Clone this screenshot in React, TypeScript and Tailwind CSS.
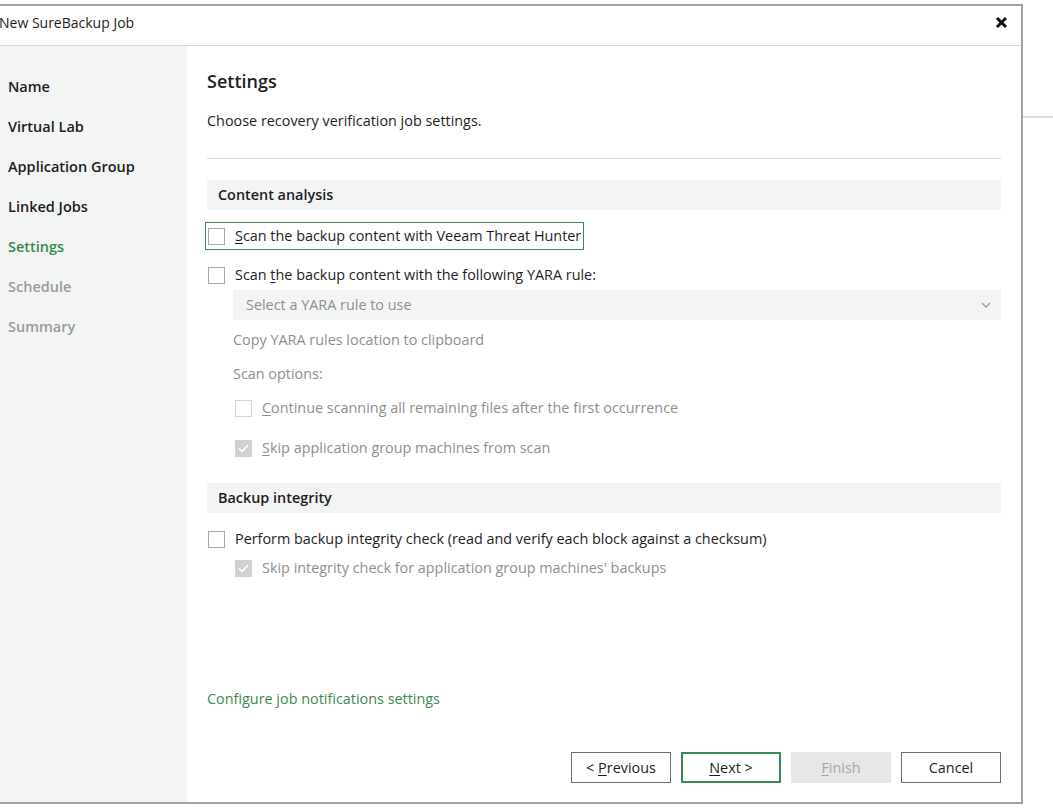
import React from "react";

const steps: { label: string; state: "done" | "active" | "todo" }[] = [
  { label: "Name", state: "done" },
  { label: "Virtual Lab", state: "done" },
  { label: "Application Group", state: "done" },
  { label: "Linked Jobs", state: "done" },
  { label: "Settings", state: "active" },
  { label: "Schedule", state: "todo" },
  { label: "Summary", state: "todo" },
];

function Box({ checked, disabled }: { checked?: boolean; disabled?: boolean }) {
  if (checked) {
    return (
      <span className="flex h-[17px] w-[17px] shrink-0 items-center justify-center bg-[#cfd0d1]">
        <svg width="11" height="9" viewBox="0 0 11 9" fill="none">
          <path d="M1 4.5 L4 7.5 L10 1" stroke="#fff" strokeWidth="1.6" />
        </svg>
      </span>
    );
  }
  return (
    <span
      className={`h-[17px] w-[17px] shrink-0 border bg-white ${
        disabled ? "border-[#d6d6d6]" : "border-[#a9a9a9]"
      }`}
    />
  );
}

function Section({ title }: { title: string }) {
  return (
    <div className="flex h-[30px] items-center bg-[#f3f4f4] px-[11px] font-semibold text-[#1e1e1e]">
      {title}
    </div>
  );
}

export default function App() {
  return (
    <div
      className="relative flex h-[811px] w-[1053px] overflow-hidden bg-white text-[14.4px] text-[#1e1e1e]"
      style={{ fontFamily: '"Open Sans", "Noto Sans", sans-serif' }}
    >
      <div className="mt-[4px] flex h-[800px] w-[1023px] shrink-0 flex-col border-t-2 border-r-2 border-b-2 border-[#a3a3a3]">
        <div className="flex h-[40px] shrink-0 items-center justify-between border-b border-[#d9d9d9] pr-[13px] pb-[6px]">
          <span className="-ml-[1px] text-[14px]">New SureBackup Job</span>
          <svg width="13" height="13" viewBox="0 0 13 13">
            <path d="M2 2 L11 11 M11 2 L2 11" stroke="#111" strokeWidth="3" />
          </svg>
        </div>

        <div className="flex min-h-0 flex-1">
          <nav className="flex w-[187px] shrink-0 flex-col bg-[#f3f4f4] pt-[21px] pl-[8px]">
            {steps.map((s) => (
              <div
                key={s.label}
                className={`flex h-[40px] items-center text-[14.5px] font-semibold ${
                  s.state === "active"
                    ? "text-[#3a8a4f]"
                    : s.state === "todo"
                      ? "text-[#9a9b9c]"
                      : "text-[#1e1e1e]"
                }`}
              >
                {s.label}
              </div>
            ))}
          </nav>

          <main className="flex min-w-0 flex-1 flex-col px-[20px]">
            <h1 className="mt-[22px] text-[18px] leading-[26px] font-semibold">Settings</h1>
            <p className="mt-[17px] leading-[20px]">Choose recovery verification job settings.</p>
            <div className="mt-[27px] h-px bg-[#d9d9d9]" />

            <div className="mt-[21px]">
              <Section title="Content analysis" />
            </div>

            <div className="mt-[12px] -ml-[2px] flex h-[28px] items-center gap-[10px] self-start border border-[#3a8a4f] pr-[2px] pl-[2px] whitespace-nowrap">
              <Box />
              <span>
                <span className="underline underline-offset-2">S</span>can the backup content with Veeam Threat Hunter
              </span>
            </div>

            <div className="mt-[11px] flex h-[28px] items-center gap-[10px] pl-[1px]">
              <Box />
              <span>
                Scan <span className="underline underline-offset-2">t</span>he backup content with the following YARA rule:
              </span>
            </div>

            <div className="ml-[26px] flex flex-col">
              <div className="mt-[1px] flex h-[30px] items-center justify-between bg-[#f3f4f4] pr-[10px] pl-[13px] text-[#8e8f90]">
                <span>Select a YARA rule to use</span>
                <svg width="10" height="6" viewBox="0 0 10 6" fill="none">
                  <path d="M1 1 L5 5 L9 1" stroke="#9a9a9a" strokeWidth="1.3" />
                </svg>
              </div>
              <div className="mt-[9px] flex h-[22px] items-center text-[#8e8f90]">
                Copy YARA rules location to clipboard
              </div>
              <div className="mt-[12px] flex h-[22px] items-center text-[#8e8f90]">Scan options:</div>
              <div className="mt-[11px] flex h-[24px] items-center gap-[10px] pl-[2px] text-[#8e8f90]">
                <Box disabled />
                <span>
                  <span className="underline underline-offset-2">C</span>ontinue scanning all remaining files after the first occurrence
                </span>
              </div>
              <div className="mt-[16px] flex h-[24px] items-center gap-[10px] pl-[2px] text-[#8e8f90]">
                <Box checked />
                <span>
                  <span className="underline underline-offset-2">S</span>kip application group machines from scan
                </span>
              </div>
            </div>

            <div className="mt-[23px]">
              <Section title="Backup integrity" />
            </div>

            <div className="mt-[13px] flex h-[26px] items-center gap-[10px] pl-[1px]">
              <Box />
              <span>Perform backup integrity check (read and verify each block against a checksum)</span>
            </div>
            <div className="mt-[4px] ml-[28px] flex h-[24px] items-center gap-[10px] text-[#8e8f90]">
              <Box checked />
              <span>Skip integrity check for application group machines' backups</span>
            </div>

            <div className="mt-auto">
              <div className="flex h-[22px] items-center text-[#3a8a4f]">Configure job notifications settings</div>
              <div className="mt-[42px] mb-[19px] flex justify-end gap-[10px]">
                <button className="h-[31px] w-[100px] border border-[#6e6e6e] bg-white">
                  &lt; <span className="underline underline-offset-2">P</span>revious
                </button>
                <button className="h-[31px] w-[100px] border-2 border-[#3a8a4f] bg-white">
                  <span className="underline underline-offset-2">N</span>ext &gt;
                </button>
                <button className="h-[31px] w-[100px] bg-[#e6e7e8] text-[#a5a6a7]">
                  <span className="underline underline-offset-2">F</span>inish
                </button>
                <button className="h-[31px] w-[100px] border border-[#6e6e6e] bg-white">Cancel</button>
              </div>
            </div>
          </main>
        </div>
      </div>
      <div className="flex-1 pt-[116px]">
        <div className="h-[2px] bg-[#dcdcdc]" />
      </div>
    </div>
  );
}
